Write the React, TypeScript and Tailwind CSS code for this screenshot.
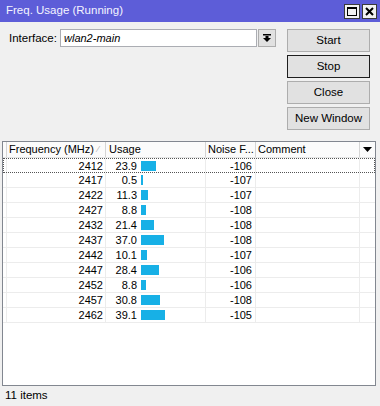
import React from "react";

const rows: [number, number, number][] = [
  [2412, 23.9, -106],
  [2417, 0.5, -107],
  [2422, 11.3, -107],
  [2427, 8.8, -108],
  [2432, 21.4, -108],
  [2437, 37.0, -108],
  [2442, 10.1, -107],
  [2447, 28.4, -106],
  [2452, 8.8, -106],
  [2457, 30.8, -108],
  [2462, 39.1, -105],
];

function Btn({ label, def }: { label: string; def?: boolean }) {
  return (
    <button
      className={
        "w-[83px] h-[23px] bg-[#e1e1e1] border flex items-center justify-center text-[11.5px] text-black " +
        (def ? "border-[#1e1e1e]" : "border-[#adadad]")
      }
    >
      {label}
    </button>
  );
}

export default function App() {
  return (
    <div
      className="w-[380px] h-[406px] bg-[#f0f0f0] flex flex-col overflow-hidden text-black"
      style={{ fontFamily: '"Liberation Sans", Arial, sans-serif' }}
    >
      {/* Title bar */}
      <div className="h-[22px] bg-[#5d5dd8] flex items-center justify-between pl-[6px] pr-[3px]">
        <span className="text-[11.5px] text-[#f4f4ff]">Freq. Usage (Running)</span>
        <div className="flex gap-[2px]">
          <div className="w-[16px] h-[15px] bg-[#f2f2f2] border border-[#3a3a3a] flex items-center justify-center">
            <div className="w-[10px] h-[9px] border border-black border-t-2" />
          </div>
          <div className="w-[15px] h-[15px] bg-[#f2f2f2] border border-[#3a3a3a] flex items-center justify-center">
            <svg width="9" height="9" viewBox="0 0 9 9">
              <path d="M1 1 L8 8 M8 1 L1 8" stroke="#000" strokeWidth="2" />
            </svg>
          </div>
        </div>
      </div>

      {/* Top controls */}
      <div className="h-[119px] flex pt-[7px]">
        <div className="flex items-start pl-[9px]">
          <span className="w-[51px] text-[11.5px] leading-[18px]">Interface:</span>
          <div className="w-[197px] h-[18px] bg-white border border-[#abadb3] flex items-center pl-[3px]">
            <span className="text-[11px] italic">wlan2-main</span>
          </div>
          <div className="ml-[1px] w-[18px] h-[18px] bg-[#e1e1e1] border border-[#adadad] flex items-center justify-center">
            <svg width="8" height="8" viewBox="0 0 8 8">
              <rect x="0" y="0" width="8" height="1.5" fill="#000" />
              <rect x="2.5" y="2" width="3" height="2" fill="#000" />
              <path d="M0 4 L8 4 L4 8 Z" fill="#000" />
            </svg>
          </div>
        </div>
        <div className="ml-[11px] flex flex-col gap-[3px]">
          <Btn label="Start" />
          <Btn label="Stop" def />
          <Btn label="Close" />
          <Btn label="New Window" />
        </div>
      </div>

      {/* Table */}
      <div className="ml-[2px] mr-[4px] h-[245px] bg-white border border-[#828790] flex flex-col text-[11px]">
        {/* header */}
        <div className="h-[16px] flex bg-[#fbfbfb] border-b border-[#e5e5e5] leading-[15px]">
          <div className="w-[4px] border-r border-[#d5d5d5]" />
          <div className="w-[99px] border-r border-[#d5d5d5] pl-[2px] flex justify-between pr-[6px]">
            <span>Frequency (MHz)</span>
            <span className="text-[#b0b0b0] text-[9px]">⁄</span>
          </div>
          <div className="w-[100px] border-r border-[#d5d5d5] pl-[3px]">Usage</div>
          <div className="w-[50px] border-r border-[#d5d5d5] pl-[2px] whitespace-nowrap overflow-hidden">Noise F...</div>
          <div className="w-[104px] border-r border-[#d5d5d5] pl-[2px]">Comment</div>
          <div className="flex-1 flex items-center justify-center">
            <svg width="9" height="5" viewBox="0 0 9 5">
              <path d="M0 0 L9 0 L4.5 5 Z" fill="#000" />
            </svg>
          </div>
        </div>
        {/* rows */}
        {rows.map(([f, u, n], i) => (
          <div
            key={f}
            className={
              "h-[15px] flex leading-[14px] border-b " +
              (i === 0 ? "border border-dotted border-[#555] -mx-0" : "border-[#ececec]")
            }
          >
            <div className={"border-r border-[#ececec] " + (i === 0 ? "w-[3px]" : "w-[4px]")} />
            <div className="w-[99px] border-r border-[#ececec] text-right pr-[2px]">{f}</div>
            <div className="w-[100px] border-r border-[#ececec] flex items-center">
              <span className="w-[31px] text-right">{u.toFixed(1)}</span>
              <div className="ml-[4px] h-[10px] bg-[#17b0e6]" style={{ width: Math.max(1.5, u * 0.62) }} />
            </div>
            <div className="w-[50px] border-r border-[#ececec] text-right pr-[3px]">{n}</div>
            <div className="w-[104px] border-r border-[#ececec]" />
            <div className="flex-1" />
          </div>
        ))}
        <div className="flex-1" />
      </div>

      {/* Status bar */}
      <div className="flex-1 flex items-center pl-[5px] text-[11.5px]">11 items</div>
    </div>
  );
}
